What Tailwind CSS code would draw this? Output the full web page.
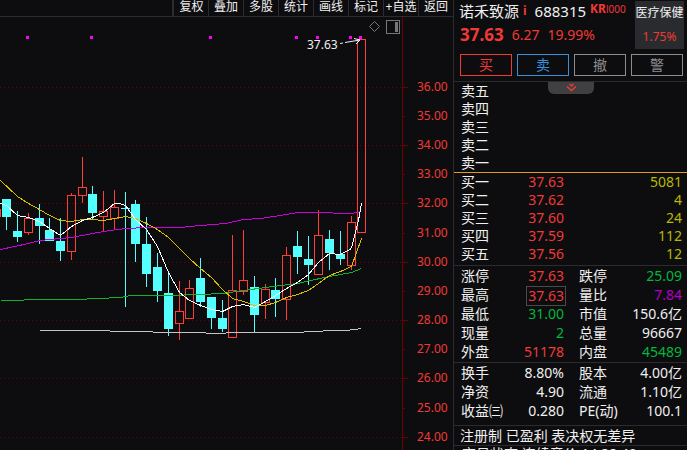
<!DOCTYPE html>
<html lang="zh-CN">
<head>
    <meta charset="UTF-8">
    <meta name="viewport" content="width=device-width, initial-scale=1.0">
    <title>诺禾致源 688315</title>
    <script src="https://cdn.jsdelivr.net/npm/@tailwindcss/browser@4"></script>
</head>
<body class="bg-[#0d0d0f] text-[#f0f0f0] font-['Noto_Sans','Noto_Sans_CJK_SC',sans-serif] h-screen overflow-hidden flex">

    <!-- Chart -->
    <main class="flex-1 min-w-0 flex flex-col">
        <nav class="flex justify-end h-[17px] border-b border-[#2c2c2e] text-xs leading-3">
            <button class="w-9 h-4 pb-[3px] pl-px border-l-2 border-[#2c2c2e] whitespace-nowrap">复权</button>
            <button class="w-[35px] h-4 pb-[3px] border-l border-[#2c2c2e] whitespace-nowrap">叠加</button>
            <button class="w-[35px] h-4 pb-[3px] border-l border-[#2c2c2e] whitespace-nowrap">多股</button>
            <button class="w-[35px] h-4 pb-[3px] border-l border-[#2c2c2e] whitespace-nowrap">统计</button>
            <button class="w-[35px] h-4 pb-[3px] border-l border-[#2c2c2e] whitespace-nowrap">画线</button>
            <button class="w-[35px] h-4 pb-[3px] border-l border-[#2c2c2e] whitespace-nowrap">标记</button>
            <button class="w-[35px] h-4 pb-[3px] border-l border-[#2c2c2e] whitespace-nowrap">+自选</button>
            <button class="w-[35px] h-4 pb-[3px] border-l border-[#2c2c2e] whitespace-nowrap">返回</button>
        </nav>

        <svg id="chart" class="w-full block" viewBox="0 17 453 433" shape-rendering="crispEdges">
            <g id="grid"></g>
            <path d="M402.5 17V450" stroke="#6e0000" />
            <g id="labels" class="text-xs" fill="#f03a36"></g>
            <g id="candles"></g>
            <g id="averages" fill="none"></g>
            <g id="marks" fill="#ff00ff"></g>
            <text x="307" y="49" class="text-xs" fill="#f0f0f0">37.63</text>
            <g fill="none" stroke="#f0f0f0" shape-rendering="auto">
                <path d="M340 43.5L343 43M345 42.5L360 40M354 38.5L360 40L356 44" />
            </g>
            <g fill="none" stroke="#77777a">
                <path d="M374.5 21.5L379.5 26.5L374.5 31.5L369.5 26.5Z" shape-rendering="auto" />
                <rect x="386.5" y="20.5" width="13" height="13" />
                <rect x="395" y="22" width="3" height="10" fill="#77777a" stroke="none" />
            </g>
        </svg>
    </main>

    <!-- Quote panel -->
    <aside class="w-[234px] shrink-0 border-l border-[#2c2c2e] text-sm">
        <header class="h-[82px] border-b border-[#2c2c2e] pl-1.5 pr-[3px] pt-px">
            <div class="flex justify-between">
                <div>
                    <h1 class="flex h-5 text-[15px] leading-5 whitespace-nowrap -ml-px">
                        <span>诺禾致源</span>
                        <b class="text-[#f03a36] text-xs leading-5 ml-1">i</b>
                        <span class="ml-2">688315</span>
                        <b class="text-[#f03a36] text-xs leading-4 ml-1">KR</b>
                        <span class="text-[#f03a36] text-[10px] leading-4">l000</span>
                    </h1>
                    <p class="flex items-center h-7 gap-2 text-[#f03a36]">
                        <b class="text-[17px]">37.63</b>
                        <span>6.27</span>
                        <span>19.99%</span>
                    </p>
                </div>
                <div class="w-[49px] h-12 bg-[#2a2b2e] text-xs text-center whitespace-nowrap">
                    <p class="leading-6">医疗保健</p>
                    <p class="leading-6 text-[#f03a36]">1.75%</p>
                </div>
            </div>
            <div class="grid grid-cols-4 gap-[5px] pt-[5px] pr-px">
                <button class="h-[22px] leading-5 border border-[#f03a36] text-[#f03a36]">买</button>
                <button class="h-[22px] leading-5 border border-[#3a8fdc] text-[#3a8fdc]">卖</button>
                <button class="h-[22px] leading-5 border border-[#8c8c8e] text-[#8c8c8e]">撤</button>
                <button class="h-[22px] leading-5 border border-[#8c8c8e] text-[#8c8c8e]">警</button>
            </div>
        </header>

        <section class="relative border-b border-[#e09a20] pl-[7px]">
            <button aria-label="展开" class="absolute top-0 left-[94px] w-[46px] h-3 rounded-b-md bg-[#404042] flex justify-center">
                <svg width="11" height="10" viewBox="0 0 11 10" fill="none" stroke="#f03a36" stroke-width="1.4">
                    <path d="M3.5 2L5.5 4L7.5 2M1 4.5L5.5 8.5L10 4.5" />
                </svg>
            </button>
            <table class="w-full leading-[18px]">
                <tr><td>卖五</td></tr>
                <tr><td>卖四</td></tr>
                <tr><td>卖三</td></tr>
                <tr><td>卖二</td></tr>
                <tr><td>卖一</td></tr>
            </table>
        </section>

        <section class="border-b border-[#2c2c2e] pb-0.5 pl-[7px] pr-[5px]">
            <table class="w-full table-fixed leading-[18px] text-right">
                <tr><td class="w-[46px] text-left">买一</td><td class="w-[57px] text-[#f03a36]">37.63</td><td class="text-[#b8b800]">5081</td></tr>
                <tr><td class="text-left">买二</td><td class="text-[#f03a36]">37.62</td><td class="text-[#b8b800]">4</td></tr>
                <tr><td class="text-left">买三</td><td class="text-[#f03a36]">37.60</td><td class="text-[#b8b800]">24</td></tr>
                <tr><td class="text-left">买四</td><td class="text-[#f03a36]">37.59</td><td class="text-[#b8b800]">112</td></tr>
                <tr><td class="text-left">买五</td><td class="text-[#f03a36]">37.56</td><td class="text-[#b8b800]">12</td></tr>
            </table>
        </section>

        <section class="border-b border-[#2c2c2e] pb-px pl-[7px] pr-[5px]">
            <table class="w-full table-fixed leading-[19px] text-right whitespace-nowrap">
                <tr><td class="w-[46px] text-left">涨停</td><td class="w-[57px] text-[#f03a36]">37.63</td><td class="w-[60px] pl-[15px] text-left">跌停</td><td class="text-[#00b83c]">25.09</td></tr>
                <tr><td class="text-left">最高</td><td class="text-[#f03a36]"><span class="outline outline-[#4a4a4c] outline-offset-1 inline-block h-4 leading-4 align-middle">37.63</span></td><td class="pl-[15px] text-left">量比</td><td class="text-[#b400c0]">7.84</td></tr>
                <tr><td class="text-left">最低</td><td class="text-[#00b83c]">31.00</td><td class="pl-[15px] text-left">市值</td><td>150.6亿</td></tr>
                <tr><td class="text-left">现量</td><td class="text-[#00b83c]">2</td><td class="pl-[15px] text-left">总量</td><td>96667</td></tr>
                <tr><td class="text-left">外盘</td><td class="text-[#f03a36]">51178</td><td class="pl-[15px] text-left">内盘</td><td class="text-[#00b83c]">45489</td></tr>
            </table>
        </section>

        <section class="border-b border-[#2c2c2e] pb-[5px] pl-[7px] pr-[5px]">
            <table class="w-full table-fixed leading-[19px] text-right whitespace-nowrap">
                <tr><td class="w-[46px] text-left">换手</td><td class="w-[57px]">8.80%</td><td class="w-[60px] pl-[15px] text-left">股本</td><td>4.00亿</td></tr>
                <tr><td class="text-left">净资</td><td>4.90</td><td class="pl-[15px] text-left">流通</td><td>1.10亿</td></tr>
                <tr><td class="text-left">收益㈢</td><td>0.280</td><td class="pl-[15px] text-left">PE(动)</td><td>100.1</td></tr>
            </table>
        </section>

        <p class="border-b border-[#2c2c2e] pl-1.5 leading-[19px] whitespace-nowrap">注册制 已盈利 表决权无差异</p>
        <p class="pl-2 leading-4 whitespace-nowrap">交易状态 连续竞价 14:28:40</p>
    </aside>

    <script>
        const RED = '#ff3c38';
        const CYAN = '#54ffff';

        const add = (parent, tag, attrs, text) => {
            const el = document.createElementNS('http://www.w3.org/2000/svg', tag);
            for (const key in attrs) el.setAttribute(key, attrs[key]);
            if (text) el.textContent = text;
            document.getElementById(parent).appendChild(el);
        };

        // price axis
        const ticks = [87, 116, 145, 174, 203, 233, 262, 291, 320, 349, 378, 408, 437];
        ticks.forEach((y, i) => {
            const major = i % 2 === 0;
            if (major) add('grid', 'path', { d: `M0 ${y + 0.5}H402`, stroke: '#6e0000', 'stroke-dasharray': '1 3' });
            add('grid', 'path', { d: `M402 ${y + 0.5}h${major ? 6 : 3}`, stroke: '#6e0000' });
            add('labels', 'text', { x: 417, y: y + 4 }, (36 - i) + '.00');
        });

        // up, centre x, high, body top, body bottom, low
        const candles = [
            [1, -4, 209, 209, 217, 217],
            [0, 6, 199, 199, 217, 230],
            [0, 17, 211, 231, 237, 242],
            [1, 28, 213, 218, 233, 235],
            [0, 39, 204, 218, 226, 244],
            [0, 49, 218, 230, 241, 241],
            [0, 60, 218, 241, 251, 261],
            [1, 71, 193, 195, 252, 260],
            [1, 82, 157, 187, 196, 203],
            [0, 92, 186, 194, 213, 219],
            [1, 103, 191, 211, 217, 232],
            [1, 114, 190, 207, 219, 230],
            [0, 125, 192, 208, 209, 307],
            [0, 135, 200, 204, 244, 262],
            [0, 146, 217, 244, 274, 287],
            [0, 157, 253, 267, 291, 302],
            [0, 168, 271, 293, 329, 336],
            [1, 179, 281, 311, 324, 340],
            [1, 189, 280, 288, 319, 319],
            [0, 200, 258, 278, 302, 307],
            [0, 211, 297, 297, 318, 329],
            [0, 222, 300, 318, 329, 332],
            [1, 232, 235, 290, 338, 338],
            [1, 243, 230, 280, 292, 295],
            [0, 254, 276, 287, 315, 332],
            [1, 265, 284, 289, 303, 319],
            [0, 275, 278, 290, 299, 317],
            [1, 286, 247, 255, 300, 320],
            [0, 297, 231, 246, 257, 274],
            [0, 308, 236, 259, 265, 285],
            [1, 318, 210, 235, 275, 275],
            [0, 329, 230, 239, 253, 270],
            [0, 340, 231, 254, 259, 265],
            [1, 351, 216, 222, 266, 270],
            [1, 361, 39, 39, 233, 233]
        ];
        candles.forEach(([up, x, high, top, bottom, low]) => {
            const color = up ? RED : CYAN;
            add('candles', 'path', { d: `M${x + 0.5} ${high}V${top}M${x + 0.5} ${bottom}V${low}`, stroke: color });
            if (up) {
                add('candles', 'rect', { x: x - 3.5, y: top + 0.5, width: 8, height: bottom - top - 1, fill: 'none', stroke: color });
            } else {
                add('candles', 'rect', { x: x - 4, y: top, width: 9, height: bottom - top, fill: color });
            }
        });

        const averages = {
            '#c4c4c4': '39,330 109,330 110,331 152,331 153,332 205,332 206,333 225,333 226,332 303,332 304,331 322,331 323,330 345,330 355,329 361,328',
            '#10b030': '0,300 23,300 24,299 76,299 98,298 120,297 130,295 168,295 200,294 222,293 243,290 265,287 297,283 310,280 329,276 351,272 361,268',
            '#cc00dd': '0,249 28,243 39,240 60,238 71,237 92,233 103,231 125,228 146,227 179,227 200,225 225,223 243,219 260,218 280,215 297,212 330,212 335,213 351,213 361,211',
            '#dcc000': '0,180 17,196 28,203 39,209 49,215 60,220 71,221 82,219 92,219 103,220 114,218 125,216 135,218 146,223 157,229 168,237 179,248 189,258 200,268 211,277 222,289 232,298 243,301 254,305 265,305 275,302 286,297 297,294 308,290 318,283 329,275 340,271 351,266 356,252 361,238',
            '#ffffff': '0,203 6,205 17,215 28,217 39,221 49,228 60,235 71,226 82,220 92,217 103,212 114,203 119,203 125,205 135,219 146,229 157,246 168,272 179,292 189,300 200,305 211,309 222,311 232,306 243,304 254,307 265,301 275,295 286,288 297,282 308,274 318,262 329,253 340,254 351,248 358,220 361,203'
        };
        for (const color in averages) {
            add('averages', 'polyline', { points: averages[color], stroke: color, transform: 'translate(0.5 0.5)' });
        }

        [26, 90, 209, 295, 316, 349, 359].forEach(x => add('marks', 'rect', { x, y: 36, width: 3, height: 3 }));
    </script>
</body>
</html>
